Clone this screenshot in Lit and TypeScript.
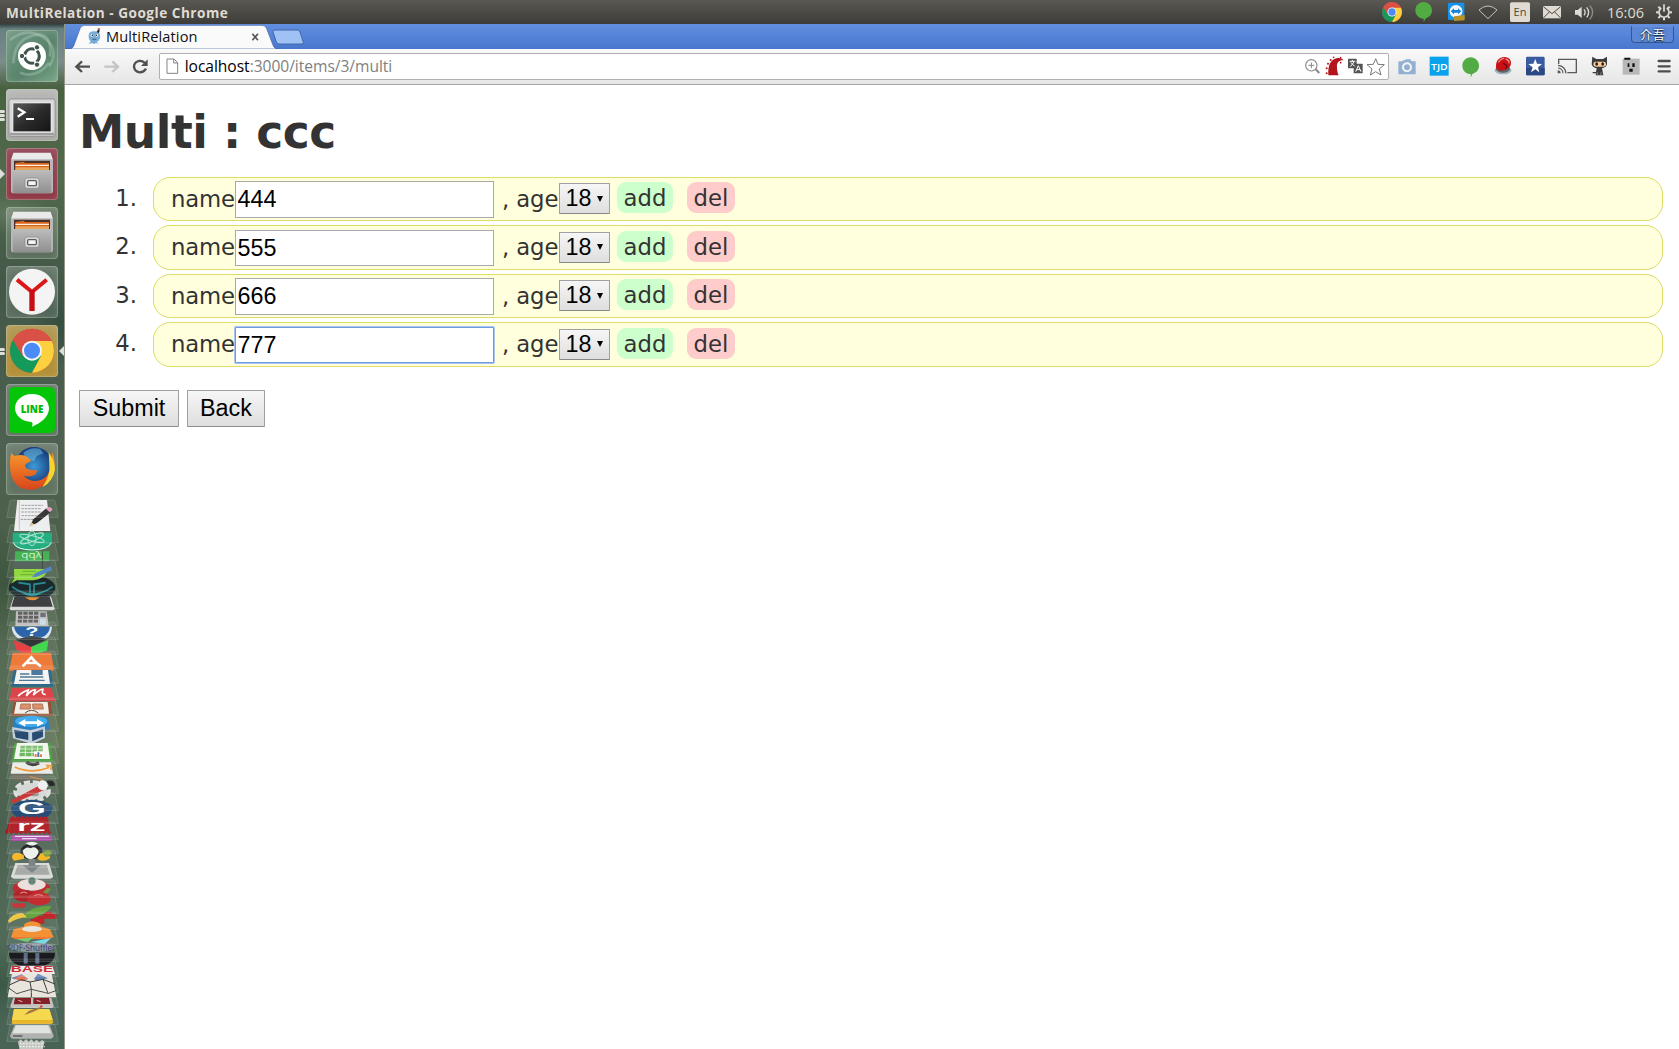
import { LitElement, html, svg, css } from "lit";
import { customElement, property } from "lit/decorators.js";

// Artwork is drawn on a grid of three units per CSS pixel.
const art = (x: number, y: number, w: number, h: number, body: unknown) =>
  html`<svg class="art" width=${w / 3} height=${h / 3} viewBox="${x} ${y} ${w} ${h}">${body}</svg>`;

const chromeBall = (cx: number, cy: number, r: number) => svg`
  <g transform="translate(${cx} ${cy}) scale(${r / 66})">
    <circle r="66" fill="#db4437"/>
    <path d="M-57-33A66 66 0 0 0 0 66L29 14-29 14Z" fill="#159a5b"/>
    <path d="M0 66A66 66 0 0 0 59-29L0-29 27 16Z" fill="#fcd03f"/>
    <path d="M-57-33A66 66 0 0 1 59-29L0-29-28 16Z" fill="#d95146"/>
    <circle r="30" fill="#f5f5f5"/><circle r="24" fill="#4b8bf5"/>
  </g>`;

const gear = (cx: number, cy: number, r: number, c: string) => svg`
  <g transform="translate(${cx} ${cy})" fill="none" stroke="${c}">
    <path d="M-8-13A15 15 0 1 0 8-13" stroke-width="5"/><path d="M0-${r}V-2" stroke-width="5"/>
    ${[45, 90, 135, 180, 225, 270, 315].map((a) => svg`<path d="M0-16V-${r}" stroke-width="6" transform="rotate(${a})"/>`)}
  </g>`;

const bubble = (cx: number, cy: number) => svg`
  <path d="M${cx} ${cy - 29}c14 0 25 11 25 25 0 14-9 21-20 25l-5 11v-11c-14 0-25-11-25-25s11-25 25-25z" fill="#52ab43"/>`;

const panelIcons = [
  art(258, 0, 96, 72, chromeBall(306, 36, 30)),
  art(354, 0, 96, 72, bubble(401, 35)),
  art(450, 0, 96, 72, svg`
    <rect x="474" y="8" width="49" height="52" rx="4" fill="#1493e8"/><circle cx="498" cy="34" r="19" fill="#f2f8fc"/>
    <path d="M482 34l10-9v5h12v-5l10 9-10 9v-5h-12v5z" fill="#1381d6"/><path d="M492 49l32-4v16l-32 2z" fill="#b99324"/>`),
  art(546, 0, 96, 72, svg`<path d="M567 30q27-24 54 0l-27 26z" fill="#45443f" stroke="#dfdbd2" stroke-width="2.5"/>`),
  art(642, 0, 96, 72, svg`<rect x="660" y="7" width="60" height="59" rx="5" fill="#dfdbd2"/>
    <text x="690" y="48" text-anchor="middle" font-size="33" class="ui" fill="#4a4943">En</text>`),
  art(738, 0, 96, 72, svg`<rect x="759" y="18" width="54" height="37" fill="#dfdbd2"/>
    <path d="M760 20l26 21 26-21M760 54l18-18M812 54l-18-18" fill="none" stroke="#4a4943" stroke-width="3"/>`),
  art(834, 0, 96, 72, svg`<path d="M855 30h8l12-10v34l-12-10h-8z" fill="#dfdbd2"/>
    <g fill="none" stroke-width="4"><path d="M882 28q7 9 0 18" stroke="#dfdbd2"/><path d="M890 22q12 15 0 30" stroke="#dfdbd2"/><path d="M899 16q18 21 0 42" stroke="#918f88"/></g>`),
];

const omniIcons = [
  art(36, 156, 62, 84, svg`<g fill="none" stroke="#8a8a8a"><circle cx="64" cy="196" r="17" stroke-width="3.5"/>
    <path d="M64 187v18M55 196h18" stroke-width="3"/><path d="M77 208l11 11" stroke-width="6"/></g>`),
  art(98, 156, 66, 84, svg`<path d="M114 226c-2-32 8-50 29-52 8-1 13 2 17 7-14-1-22 7-20 22 0 9 2 16 5 23z" fill="#b5131b"/>
    <g fill="#b5131b"><circle cx="109" cy="205" r="3"/><circle cx="109" cy="220" r="3"/><circle cx="113" cy="191" r="3"/><circle cx="121" cy="180" r="3"/><circle cx="130" cy="172" r="2.5"/><circle cx="151" cy="173" r="2.5"/><circle cx="151" cy="188" r="2.5"/></g>`),
  art(164, 156, 60, 84, svg`<rect x="173" y="176" width="26" height="29" rx="2" fill="#545454"/><rect x="190" y="191" width="27" height="29" rx="2" fill="#545454"/>
    <path d="M178 184h17M186 180v5M180 200l11-14M181 187l12 12" stroke="#fff" stroke-width="3"/><path d="M196 215l8-18 8 18M199 209h10" stroke="#fff" stroke-width="3" fill="none"/>`),
  art(224, 156, 70, 84, svg`<path d="M256 176l7 17 19 1-15 13 5 18-16-10-16 10 5-18-15-13 19-1z" fill="#fff" stroke="#777" stroke-width="3"/>`),
];

const extensions = [
  art(304, 148, 96, 104, svg`<path d="M330 185h9v-3h7v3h-2l4-6h14l4 6h12v39h-51q-1 0-1-3v-33q0-3 4-3z" fill="#92b1d2"/><circle cx="352" cy="203" r="15" fill="#f4f4f4"/><circle cx="352" cy="203" r="9" fill="#92b1d2"/>`),
  art(400, 148, 96, 104, svg`<path d="M420 171h57v57h-57z" fill="#08a3ec"/><text x="449" y="210" text-anchor="middle" font-size="28" font-weight="600" textLength="50" lengthAdjust="spacingAndGlyphs" class="ui" fill="#fff">TJD</text>`),
  art(496, 148, 96, 104, bubble(543, 202)),
  art(592, 148, 96, 104, svg`<ellipse cx="640" cy="212" rx="25" ry="12" fill="#a2b0b5"/><ellipse cx="640" cy="207" rx="21" ry="12" fill="#54686f"/>
    <path d="M620 207c-4-20 6-35 24-35 16 0 23 12 19 24-5 16-32 23-43 11z" fill="#c81016"/><path d="M626 188q8-12 18-12M648 178q12 4 10 13" stroke="#f28b84" stroke-width="4" fill="none"/><path d="M640 190l12 8-4 9" fill="none" stroke="#660a0a" stroke-width="4"/>`),
  art(688, 148, 96, 104, svg`<rect x="709" y="171" width="56" height="56" rx="4" fill="#3a5b9f"/><path d="M709 205h56v18q0 4-4 4h-48q-4 0-4-4z" fill="#2b4885"/><path d="M737 178l5 14 15 1-12 10 4 15-12-9-13 9 5-15-13-10 15-1z" fill="#fff"/>`),
  art(784, 148, 96, 104, svg`<g fill="none" stroke="#5a5a5a"><path d="M807 193v-14h53v40h-27" stroke-width="4"/><path d="M805 205q14 1 15 16M805 197q22 2 24 24" stroke-width="3.5"/></g><path d="M804 212q9 0 9 9h-9z" fill="#5a5a5a"/>`),
  art(880, 148, 96, 104, svg`<path d="M908 171l12 7h20l12-7v23q-3 10-15 12l4 21h-23l3-21q-12-2-15-12z" fill="#3b3b3d"/><path d="M909 219h9q5 0 6-9" fill="none" stroke="#3b3b3d" stroke-width="4"/>
    <rect x="911" y="186" width="38" height="15" rx="7" fill="#f5cd9b"/><g fill="#26190f"><ellipse cx="921" cy="193" rx="4" ry="5"/><ellipse cx="939" cy="193" rx="4" ry="5"/></g><path d="M923 227v-9M934 227v-9" stroke="#8b8b8b" stroke-width="3"/>`),
  art(976, 148, 96, 104, svg`<path d="M999 177h51v48h-51z" fill="#b8b8b8"/><path d="M1004 180v-6h18v6zM1014 191h5v11h-5zM1028 191h7v11h-7zM1019 207h10v9h-10z" fill="#111"/>`),
  art(1072, 148, 95, 104, svg`<path d="M1107 184h33M1107 200h33M1107 215h33" stroke="#4d4d4d" stroke-width="7" stroke-linecap="round"/>`),
];

const cabinet = (y: number) => svg`<g transform="translate(0 ${y})">
  <path d="M40 14h112l7 22v8H33v-8z" fill="#e9e9e9"/><path d="M33 34h126v95q0 7-7 7H40q-7 0-7-7z" fill="#b9b9b9"/>
  <path d="M42 38h108v34H42z" fill="#47312a"/><path d="M46 45l25-4 4 4h72v22H46z" fill="#d8641d"/><path d="M46 50h101v4H46z" fill="#fff1dd"/><path d="M46 58h101v12H46z" fill="#e9a45b"/>
  <path d="M38 66h116v64q0 6-6 6H44q-6 0-6-6z" fill="url(#steel)"/><rect x="75" y="90" width="42" height="31" rx="6" fill="#d8d8d8" stroke="#888" stroke-width="2"/><rect x="83" y="98" width="26" height="15" rx="3" fill="#f4f4f4" stroke="#5d5d5d" stroke-width="4"/></g>`;

const defs = svg`<defs>
  <linearGradient id="steel" x2="0" y2="1"><stop stop-color="#bcbcbc"/><stop offset="1" stop-color="#8f8f8f"/></linearGradient>
  <linearGradient id="screen" x2="1" y2="1"><stop stop-color="#5b5b5b"/><stop offset=".5" stop-color="#2b2b2b"/><stop offset="1" stop-color="#151515"/></linearGradient>
  <radialGradient id="globe"><stop stop-color="#3d9bd8"/><stop offset="1" stop-color="#173a78"/></radialGradient>
  <linearGradient id="fox" x2="0" y2="1"><stop stop-color="#f79a2c"/><stop offset="1" stop-color="#d9451b"/></linearGradient>
</defs>`;

const launchers: { kind: string; running?: number; picture: unknown }[] = [
  { kind: "dash", picture: art(18, 30, 156, 156, svg`
    <g fill="none" stroke="#c9e0d3" stroke-opacity=".3" stroke-width="8"><path d="M40 130Q42 60 100 46T150 110"/><path d="M30 60Q80 20 130 52T148 140"/><path d="M60 158q50 20 88-30"/></g>
    <circle cx="96" cy="108" r="42" fill="#fff"/><circle cx="96" cy="108" r="22" fill="none" stroke="#3f5549" stroke-width="9" stroke-dasharray="39 7" stroke-dashoffset="-27"/>
    <g fill="#3f5549" stroke="#fff" stroke-width="3"><circle cx="66" cy="108" r="8"/><circle cx="111" cy="82" r="8"/><circle cx="111" cy="134" r="8"/></g>`) },
  { kind: "terminal", running: 3, picture: art(18, 207, 156, 156, svg`${defs}
    <rect x="27" y="237" width="138" height="112" rx="7" fill="#d7d8d8" stroke="#7f8080" stroke-width="2"/><path d="M30 338h132v8H30z" fill="#9d9d9d"/><rect x="36" y="246" width="120" height="92" fill="#e5e5e5"/>
    <rect x="40" y="250" width="112" height="84" fill="url(#screen)"/><path d="M53 265l20 12-20 13" fill="none" stroke="#fff" stroke-width="7"/><path d="M78 297h24" stroke="#fff" stroke-width="6"/>`) },
  { kind: "files-red", running: 1, picture: art(18, 384, 156, 156, svg`${defs}${cabinet(384)}`) },
  { kind: "plain", picture: art(18, 561, 156, 156, svg`${defs}${cabinet(561)}`) },
  { kind: "plain", picture: art(18, 18, 156, 156, svg`<circle cx="96" cy="95" r="69" fill="#f4f4f4"/><path d="M51 59l45 37 44-37" fill="none" stroke="#dc1717" stroke-width="12"/><path d="M88 91h16v62H88z" fill="#c90d15"/>`) },
  { kind: "gold", running: 2, picture: art(18, 195, 156, 156, chromeBall(96, 272, 66)) },
  { kind: "plain", picture: art(18, 372, 156, 156, svg`<rect x="27" y="381" width="138" height="138" rx="16" fill="#04c508"/>
    <path d="M96 402c29 0 51 19 51 43 0 27-27 46-51 55 2-7 3-12-2-14-27-1-49-18-49-41 0-24 22-43 51-43z" fill="#fff"/>
    <text x="96" y="458" text-anchor="middle" font-size="33" font-weight="800" textLength="68" lengthAdjust="spacingAndGlyphs" class="ui" fill="#04b808">LINE</text>`) },
  { kind: "plain", picture: art(18, 549, 156, 156, svg`${defs}<circle cx="102" cy="619" r="58" fill="url(#globe)"/><path d="M70 578q20-18 50-12l10 14-20 8-8 16-25-8z" fill="#6dbbe2" opacity=".55"/>
    <path d="M34 578q4 8 12 10 20-8 36 3l12 12-16 8q-6 8 4 16 16 5 31 3l-8 14q-17 9-34 3 26 26 58 10 30-18 27-82 13 27 5 56-12 50-63 58-50 3-65-45-7-38 1-66z" fill="url(#fox)"/>
    <path d="M146 577q19 24 19 52-6 35-38 53 25-37 21-68z" fill="#f9d42f"/>`) },
];

// Folded launcher icons, listed from the top of the pile downwards.
const pileTops = [500, 525, 543, 560, 577, 591, 608, 622, 637, 651, 666, 682, 698, 714, 730, 746, 761, 776, 793, 806, 822, 836, 850, 866, 880, 896, 912, 927, 944, 959, 975, 990, 1007, 1024];

const pile = html`<svg class="art" width="65" height="553" viewBox="0 496 65 553">
  ${defs}
  <g transform="translate(0 490) scale(.33333)">
    <path d="M52 30h89l10 93H42z" fill="#eceef0"/><path d="M58 31v89" stroke="#e58f8f" stroke-width="2"/><path d="M64 46h65M64 56h58M64 66h60M64 77h48M62 88h50" stroke="#9a9a9a" stroke-width="3" stroke-dasharray="8 2"/>
    <path d="M89 109l11-21 39-33 13 12-41 32z" fill="#2b2b2b"/><path d="M89 109l6-12 9 8z" fill="#e8cf8c"/><path d="M138 56l8-5q10 1 11 9l-8 7z" fill="#e49bb8"/>
    <path d="M38 128h118v24q-3 29-60 30-57-1-58-30z" fill="#14a878"/><path d="M40 158q8 21 56 22 50-1 58-22" fill="none" stroke="#e4f2ea" stroke-width="3"/><g fill="none" stroke="#a6e4cc" stroke-width="3"><ellipse cx="96" cy="145" rx="38" ry="8" transform="rotate(14 96 145)"/><ellipse cx="96" cy="145" rx="37" ry="9" transform="rotate(-22 96 145)"/><ellipse cx="96" cy="145" rx="12" ry="22"/></g>
    <path d="M42 184h108l4 52H38z" fill="#4b5a53"/><path d="M46 184h102v30H44z" fill="#37ad47"/><text x="94" y="-190" transform="scale(1 -1)" text-anchor="middle" font-size="28" textLength="60" lengthAdjust="spacingAndGlyphs" class="ui" fill="#d8f3d2">ddy</text><path d="M126 184h3v52h-3z" fill="#33423b"/>
    <ellipse cx="96" cy="293" rx="70" ry="36" fill="#0a191c"/><path d="M36 290q60 45 122 0M55 278l35 5v32M137 278l-35 5v32M70 310q26 12 52 0" fill="none" stroke="#18858a" stroke-width="5"/>
    <path d="M42 237h98q2 28-42 34H50l-17 10 10-15z" fill="#89d831"/><path d="M68 244h40M61 254h38" stroke="#4d8f20" stroke-width="2"/><path d="M95 262l12-13 45-20 5 12-49 20z" fill="#447ebd"/>
    <path d="M41 320h112l11 36q-2 5-7 5H36q-6 0-7-5z" fill="#d5d5d5"/><path d="M43 320h106l9 30H34z" fill="#303236"/><path d="M74 322h45q-20 18-45 0z" fill="#e98829"/>
    <path d="M48 364h92l6 44H46z" fill="#b9bab9"/><path d="M54 370h61M54 382h62M53 394h62" stroke="#555" stroke-width="9" stroke-dasharray="13 3"/><path d="M121 368h16v13h-16z" fill="#62676b"/><path d="M120 386h17v18h-17z" fill="#c6dbe6"/>
    <path d="M35 410h121q-2 46-60 46-59-4-61-46z" fill="#d8e2ed"/><path d="M42 410h108q-5 37-54 37-48-3-54-37z" fill="#1c58a3"/><text x="96" y="438" text-anchor="middle" font-size="40" class="pic" font-weight="700" fill="#fff" textLength="40" lengthAdjust="spacingAndGlyphs">?</text>
    <path d="M46 448l50-10 47 9-50 24z" fill="#242729"/><path d="M40 451l53 20v27l-43-17z" fill="#e73337"/><path d="M93 471l52-21-4 31-48 18z" fill="#35d443"/>
    <path d="M38 488h115l10 54H28z" fill="#ed702c"/><path d="M68 529l26-27q9 14 29 27M78 519h35" fill="none" stroke="#fff" stroke-width="8"/>
    <path d="M42 543h110l6 32H34z" fill="#1c668e"/>
  </g>
  <g transform="translate(0 670) scale(.33333)">
    <path d="M42 0h110l7 50H33z" fill="#205d80"/><path d="M50 0h94l6 42H42z" fill="#f4f4f4"/><path d="M60 12h28M60 21h70M57 31h77" stroke="#43708c" stroke-width="4"/><path d="M94 0h34v15H94z" fill="#416f97"/>
    <path d="M36 54h118l12 40H27z" fill="#d9373c"/><path d="M54 78q18-15 31-18l-6 18q16-20 27-18l-6 15q22-19 29-17-6 17 8 15" fill="none" stroke="#fff" stroke-width="5"/>
    <path d="M42 96h110l6 42H34z" fill="#8f4323"/><path d="M49 96h94l4 35H42z" fill="#f2eee7"/><path d="M63 102h28v15H60zM98 102h29l3 15H99z" fill="#d58a63" stroke="#b26848" stroke-width="3"/><path d="M75 129q20-16 40 0" fill="none" stroke="#55402f" stroke-width="3"/>
    <path d="M43 143h101l5 36H41z" fill="#1776c2"/><ellipse cx="94" cy="154" rx="48" ry="17" fill="#35a6ed"/><path d="M55 159l21-12v7h35v-7l21 12-21 11v-8H76v8z" fill="#fff"/>
    <path d="M36 171l55 10 44-12v35l-39 18-57-17z" fill="#bdcbda"/><path d="M42 179l43 8v23l-38-7zM96 188l33-10v22l-32 14z" fill="#193e66"/>
    <path d="M43 219h108l8 56H34z" fill="#3f9a35"/><path d="M51 219h92l7 48H42z" fill="#f3f7ee"/><path d="M62 227h66v32H58z" fill="#63b356"/><path d="M60 237h67M59 247h66M76 227v32M96 227v32M113 227v32" stroke="#f3f7ee" stroke-width="2.500"/><path d="M102 244h28v18h-28z" fill="#fff"/><path d="M107 261v-9M123 261v-8" stroke="#e47636" stroke-width="6"/><path d="M115 261v-14" stroke="#2f6fb4" stroke-width="6"/>
    <path d="M38 277h115l6 34H32z" fill="#e9ebe6"/><path d="M79 276q16 14 38 2" fill="none" stroke="#333" stroke-width="10"/><path d="M44 291q50 22 101 2l-4-7 14 1-3 13" fill="none" stroke="#ee942a" stroke-width="5"/>
    <path d="M36 312h100q-10 18-39 20H56q-25-2-20-20z" fill="#656154"/><path d="M89 320l41 10" stroke="#b97e34" stroke-width="4"/>
    <ellipse cx="96" cy="364" rx="49" ry="26" fill="none" stroke="#dadddb" stroke-width="15" stroke-dasharray="18 8"/><ellipse cx="96" cy="364" rx="46" ry="25" fill="#d3d5d3"/><ellipse cx="104" cy="371" rx="13" ry="8" fill="#8d9890"/><path d="M35 391l86-46q2 13 13 14l-93 41q-9-1-6-9z" fill="#c52a2c"/><circle cx="128" cy="346" r="15" fill="#eee"/><path d="M139 333q24-7 26 14l-16 2z" fill="#17191d"/>
    <path d="M32 408q65-38 126 0 0 42-62 43-64-1-64-43z" fill="#17406d"/><text x="96" y="432" text-anchor="middle" font-size="48" font-weight="700" class="pic" fill="#fff" textLength="84" lengthAdjust="spacingAndGlyphs">G</text>
    <path d="M31 444l8-7 7 7 7-7 7 7 7-7 7 7 7-7 7 7 7-7 7 7 7-7 7 7 7-7 7 7 7-7 8 9 3 34 6 8-7 5-7-6-7 6-7-6-7 6-7-6-7 6-7-6-7 6-7-6-7 6-7-6-7 6-7-6-7 6-7-6-7 6-7-6-7 6-6-6 6-10z" fill="#aa141b"/><text x="94" y="484" text-anchor="middle" font-size="44" font-weight="700" class="pic" fill="#fff" textLength="85" lengthAdjust="spacingAndGlyphs">rz</text>
    <path d="M38 495h117v18H34z" fill="#a63da2"/><path d="M45 499h102M66 506h44" stroke="#ecd2ee" stroke-width="4"/>
    <ellipse cx="94" cy="545" rx="33" ry="24" fill="#17191c"/><path d="M76 520q20-10 38 0-16 14-38 0M68 543q10-16 24-8 14-9 24 9-3 20-24 24-20-3-24-25z" fill="#eef0eb"/><path d="M36 558q6-12 22-8l13 4 2 12-31 6q-8-7-6-14zM112 564l10-14q26 0 29 14l-12 7q-24 4-27-7z" fill="#f6b31a"/><path d="M126 548q18-14 30-2-6 17-20 14z" fill="#7b9a34"/>
  </g>
  <g transform="translate(0 859) scale(.33333)">
    <path d="M46 12h101l12 40q0 6-8 7H42q-8-1-9-7z" fill="#d8dad7"/><path d="M53 18h88l8 29H43z" fill="#a2a4a1"/><path d="M86 0h20v19h16l-26 22-28-22h18z" fill="#747b7b"/>
    <ellipse cx="94" cy="88" rx="56" ry="27" fill="#b71c26"/><ellipse cx="95" cy="77" rx="42" ry="18" fill="#e9ddd8"/><circle cx="96" cy="66" r="11" fill="#4e7165"/><path d="M120 108l22-22 12 3-18 22z" fill="#6b8a3a"/><ellipse cx="72" cy="110" rx="33" ry="18" fill="#a81418"/><ellipse cx="117" cy="119" rx="35" ry="20" fill="#c11c20"/><path d="M61 103q12-7 20 0M102 111q14-8 27 0" stroke="#df7371" stroke-width="4" fill="none"/>
    <path d="M33 133h45v12l-36 2z" fill="#c5272c"/><path d="M101 170h28v-12h27v7h13v14h-36v15H92v-14h9z" fill="#bd171a"/><path d="M69 172q29-35 86-30-15 22-35 25-14 13-49 10z" fill="#5c9e31"/><path d="M24 185q12-22 43-23 11 6 13 13-28 2-53 17z" fill="#edc33c"/>
    <path d="M72 203q-4-12 25-16 29 4 25 16l28 8 11 24q-64 6-128 0l8-24z" fill="#f28926"/><ellipse cx="96" cy="210" rx="30" ry="9" fill="#e5e1da"/><path d="M33 234h127l-13 6H45z" fill="#f36d22"/><path d="M48 241l53-6-18 14z" fill="#69c86a"/><path d="M92 249l61-12-18 17z" fill="#72d8e9"/>
    <ellipse cx="96" cy="265" rx="68" ry="14" fill="#c0c3d6" opacity=".45"/><path d="M27 281h138q1 42-69 44-69-2-69-44z" fill="#080a0f"/><path d="M77 282v32M112 282v32" stroke="#56617e" stroke-width="12"/><text x="95" y="277" text-anchor="middle" font-size="29" class="ui" fill="#28287b" textLength="142" lengthAdjust="spacingAndGlyphs">PDF-Shuffler</text>
    <path d="M35 320h122l8 25H28z" fill="#eee8e8"/><text x="96" y="340" text-anchor="middle" font-size="27" font-weight="700" class="pic" fill="#cb1e25" textLength="128" lengthAdjust="spacingAndGlyphs">BASE</text>
    <path d="M36 344h119l14 71H23z" fill="#e8e4da"/><path d="M34 357l31-11 20 15h-42zM88 344l14 15 12-15 30 14-36 7z" fill="#5877b1"/><path d="M65 347l19 13-16 7-26-8z" fill="#e36b54"/><path d="M28 378l35-16 27 7 4 22-44 13-24-17M90 369l39-8 36 14M94 391l51 12 23-8M94 391v24M129 361l15 42" fill="none" stroke="#292c2c" stroke-width="3"/>
    <path d="M40 416h114l7 25q0 6-7 6H38q-8-1-7-6z" fill="#bebfb9"/><path d="M45 417h48v19H41zM100 417h47l4 18h-51z" fill="#7c1018"/><path d="M55 424l12 4M110 424l12 4" stroke="#e3beb8" stroke-width="3"/>
    <path d="M41 453h108l11 37q-3 5-7 5H38l-3-4z" fill="#e7b119"/><path d="M42 450h106l10 33H36z" fill="#f5d443"/><path d="M73 468l14-13 36-12 2 4-34 15z" fill="#9b6a35"/><circle cx="124" cy="443" r="4" fill="#d32b22"/>
    <path d="M44 498h105l12 33q-3 8-8 8H38q-6-1-8-8z" fill="#aaaead"/><path d="M48 499h96l10 24H37z" fill="#dfe1df"/><path d="M39 531h28" stroke="#444" stroke-width="4"/>
    <path d="M54 549l8-8 8 7 8-8 8 8 8-7 8 8 8-7 8 8 8-7 8 5-6 25H59z" fill="#c6c8c3"/><path d="M60 554h70M60 563h74" stroke="#eee" stroke-width="4" stroke-dasharray="5 4"/>
  </g>
  ${pileTops.map((y) => svg`<path d="M${11} ${y}h42.500q1.500 0 1.800 1.500l3 16h-51.500l3-16q.2-1.500 1.200-1.500z" fill="#ffffff" fill-opacity=".07" stroke="#e4eee5" stroke-opacity=".2" stroke-width=".8"/>`)}
</svg>`;

@customElement("launch-bar")
export class LaunchBar extends LitElement {
  static styles = css`
    :host { display: block; width: 65px; box-sizing: border-box; overflow: hidden; padding-top: 6px; position: relative;
      border-right: 1px solid #8f9883;
      background:
        radial-gradient(ellipse 44px 20px at 10px 190px, #6b8068aa, #0000),
        radial-gradient(ellipse 34px 44px at 62px 300px, #2e493ab0, #0000),
        radial-gradient(ellipse 50px 60px at 4px 560px, #2f4a3190, #0000),
        radial-gradient(ellipse 30px 60px at 62px 720px, #76895b90, #0000),
        radial-gradient(ellipse 40px 40px at 2px 960px, #2f4e3c90, #0000),
        linear-gradient(#667f80 0, #7b8c8a 38px, #48613f 64px, #526a4c 150px, #435848 260px, #4e6150 420px, #4c604b 520px, #586d56 660px, #4b6150 800px, #516a58 900px, #486354 1025px); }
    :host::before { content: ""; position: absolute; inset: 0 0 auto; height: 5px; background: linear-gradient(#17201caa, #0000); }
    .list { display: flex; flex-direction: column; gap: 7px; }
    .item { display: flex; align-items: center; height: 52px; position: relative; padding-left: 6px; }
    .tile { box-sizing: border-box; width: 52px; height: 52px; border-radius: 4px; overflow: hidden; box-shadow: inset 0 0 0 1px #c8d9ca50, inset 0 0 8px #ffffff28; background: linear-gradient(#ffffff30, #ffffff18); }
    .dash { background: linear-gradient(135deg, #769b87, #578269 60%, #77a587); }
    .terminal { background: linear-gradient(#b8b8b6, #a5a5a2); }
    .files-red { background: linear-gradient(#944655, #8f3443); }
    .gold { background: linear-gradient(#b09a58, #b38e33); }
    .art { display: block; }
    .ui { font-family: "Open Sans", "Noto Sans", sans-serif; }
    .pic { font-family: "Liberation Sans", Arial, sans-serif; }
    .marks { position: absolute; left: 0; top: 20px; height: 12px; display: flex; flex-direction: column; justify-content: center; gap: 1px; }
    .mark { width: 5px; height: 3px; border-radius: 0 2px 2px 0; background: #dededb; }
    .arrow { width: 0; border: 5px solid transparent; border-left-color: #dededb; border-right: 0; }
    .focus { position: absolute; right: 0; top: 21px; border: 5px solid transparent; border-right-color: #dededb; border-left: 0; }
    .pile { padding-top: 1px; }
  `;
  render() {
    return html`<div class="list">${launchers.map((l) => html`<div class="item">
      ${l.running ? html`<div class="marks">${l.running === 1 ? html`<i class="arrow"></i>` : Array.from({ length: l.running }, () => html`<i class="mark"></i>`)}</div>` : ""}
      <div class="tile ${l.kind}">${l.picture}</div>
      ${l.kind === "gold" ? html`<i class="focus"></i>` : ""}
    </div>`)}</div><div class="pile">${pile}</div>`;
  }
}

@customElement("multi-page")
export class MultiPage extends LitElement {
  @property({ attribute: false }) names = ["444", "555", "666", "777"];
  static styles = css`
    :host { display: block; background: #fff; color: #333; font: 22.75px "DejaVu Sans", sans-serif; padding: 0 16px 0 14px; }
    h1 { box-sizing: border-box; margin: 0; padding: 18.2px 0 0; height: 91.7px; font-size: 45.5px; line-height: 60px; font-weight: 700; letter-spacing: -.42px; }
    ol { margin: 0; padding: 0; list-style: none; display: flex; flex-direction: column; gap: 3.75px; }
    li { display: flex; height: 44.75px; }
    .num { width: 58px; padding-right: 16px; text-align: right; line-height: 43px; }
    .row { flex: 1; box-sizing: border-box; display: flex; align-items: flex-start; border: 1px solid #dddd66; border-radius: 17px; background: #ffffdd; padding-left: 17px; }
    .label { width: 64px; line-height: 43px; white-space: pre; margin-top: 0.300px; letter-spacing: -.15px; }
    .age { width: 57px; padding-left: 8px; letter-spacing: -.1px; }
    .field { box-sizing: border-box; width: 259px; height: 36.5px; margin-top: 3.7px; padding: 0 1.500px; border: 1px solid #a9a9a9; border-radius: 0; outline: 0; background: #fff; color: #000; font: 23.33px "Liberation Sans", Arial, sans-serif; line-height: 34px; }
    .active { border-color: #6e9ae0; box-shadow: 0 0 0 1px #a9c5f2; border-radius: 1px; }
    .pick { box-sizing: border-box; width: 51px; height: 31px; margin-top: 5.7px; display: flex; align-items: center; gap: 6px; padding: 0 5.5px; border: 1px solid #a0a0a0; border-bottom-color: #888; border-radius: 1px; background: linear-gradient(#f6f6f6, #dedede); color: #000; font: 23.33px "Liberation Sans", Arial, sans-serif; line-height: 28px; padding-bottom: 1px; }
    .caret { border: 3px solid transparent; border-top: 6px solid #000; border-bottom: 0; margin-top: 1px; }
    .chip { height: 31px; line-height: 32px; margin-top: 4.7px; border-radius: 9px; text-align: center; }
    .add { width: 56px; margin-left: 7px; background: #ccffcc; }
    .del { width: 48px; margin-left: 14px; background: #ffcccc; }
    .actions { display: flex; gap: 8px; margin-top: 22.9px; }
    .btn { box-sizing: border-box; height: 37px; padding: 0; border: 1px solid #a0a0a0; border-bottom-color: #8c8c8c; border-radius: 1px; background: linear-gradient(#f6f6f6, #dedede); color: #000; font: 23.33px "Liberation Sans", Arial, sans-serif; }
    .submit { width: 100px; }
    .back { width: 78px; }
  `;
  render() {
    return html`<h1>Multi : ccc</h1>
      <ol>${this.names.map((n, i) => html`<li><span class="num">${i + 1}.</span><div class="row">
        <span class="label">name</span><input class="field ${i === 3 ? "active" : ""}" .value=${n}>
        <span class="label age">, age</span><span class="pick">18<i class="caret"></i></span>
        <span class="chip add">add</span><span class="chip del">del</span></div></li>`)}</ol>
      <div class="actions"><button class="btn submit">Submit</button><button class="btn back">Back</button></div>`;
  }
}

@customElement("app-root")
export class AppRoot extends LitElement {
  static styles = css`
    :host { display: flex; flex-direction: column; width: 100%; height: 100vh; overflow: hidden; font-family: "Open Sans", "Noto Sans", "Noto Sans CJK JP", sans-serif; }
    .art { display: block; flex: none; }
    .ui { font-family: "Open Sans", "Noto Sans", sans-serif; }
    .panel { flex: none; height: 24px; display: flex; align-items: center; background: linear-gradient(#5a5852, #3d3c38); color: #dfdbd2; }
    .title { flex: 1; padding-left: 6px; font-size: 13.6px; font-weight: 700; letter-spacing: .5px; }
    .clock { width: 51px; text-align: center; font-size: 14.5px; }
    .body { flex: 1; display: flex; min-height: 0; }
    .window { flex: 1; min-width: 0; display: flex; flex-direction: column; background: #fff; }
    .tabs { flex: none; height: 25px; display: flex; background: linear-gradient(#628fdf, #4877cd); justify-content: space-between; }
    .tabrow { display: grid; grid-template-columns: 240px; }
    .shape, .tabtext { grid-area: 1 / 1; }
    .tabtext { display: flex; align-items: center; z-index: 1; padding: 0 45px 0 22px; color: #111; font-size: 14.6px; }
    .name { flex: 1; padding-left: 5px; letter-spacing: .1px; line-height: 23px; }
    .user { box-sizing: border-box; width: 43px; height: 17px; margin: 2px 5px 0 0; border: 1px solid #34578f; border-top-color: #6a8fd4; border-radius: 0 0 4px 4px; background: #5b87d6; color: #fff; font-size: 12.5px; line-height: 17px; text-align: center; text-shadow: 0 0 2px #123, 0 1px 1px #123; }
    .bar { flex: none; box-sizing: border-box; height: 36px; display: flex; align-items: center; background: linear-gradient(#f9f9f9, #e6e6e6); border-bottom: 1px solid #a6a6a6; }
    .omni { flex: 1; box-sizing: border-box; height: 27px; margin: 0 2.500px 1px 0; border: 1px solid #b0b0b0; border-radius: 2px; background: #fff; display: flex; align-items: center; }
    .url { flex: 1; padding-left: 5px; font-size: 15.6px; color: #808080; line-height: 23px; letter-spacing: -.04px; }
    .host { color: #000; }
    launch-bar { flex: none; }
    multi-page { flex: 1; }
  `;
  render() {
    return html`
      <div class="panel"><div class="title">MultiRelation - Google Chrome</div>${panelIcons}<div class="clock">16:06</div>
        ${art(1083, 0, 84, 72, gear(1122, 37, 24, "#dfdbd2"))}</div>
      <div class="body"><launch-bar></launch-bar>
        <div class="window">
          <div class="tabs"><div class="tabrow">
            <div class="shape">${art(195, 72, 720, 75, svg`
              <path d="M195 147h12q10 0 14-9l19-52q4-10 14-10h532q10 0 14 10l20 52q4 9 14 9z" fill="#fafafa" stroke="#3e62a5" stroke-width="2"/>
              <path d="M824 90h68q6 0 8 6l10 31q1 5-5 5h-68q-6 0-8-6l-10-30q-2-6 5-6z" fill="#a0c1f3" stroke="#4168ae" stroke-width="3"/>`)}</div>
            <div class="tabtext">${art(261, 84, 42, 54, svg`<path d="M266 105q0-10 17-11 17 1 17 12v9q-2 9-10 10l6 6-8-2-6 3-6-3-10 3 6-8q-7-5-6-19z" fill="#78acd5"/><path d="M290 96l5-8 4 3-2 8z" fill="#222"/><path d="M293 87h7" stroke="#c33" stroke-width="4"/><circle cx="276" cy="106" r="4" fill="#fff"/><circle cx="290" cy="106" r="4" fill="#fff"/><circle cx="277" cy="106" r="2.500" fill="#234"/><circle cx="289" cy="106" r="2.500" fill="#234"/><path d="M277 117q6 4 12 0" stroke="#345d84" stroke-width="3" fill="none"/>`)}
              <span class="name">MultiRelation</span>${art(752, 84, 27, 54, svg`<path d="M756 101l17 20M773 101l-17 20" stroke="#555" stroke-width="5"/>`)}</div>
          </div><div class="user">介吾</div></div>
          <div class="bar">
            ${art(195, 147, 283, 105, svg`<g fill="none" stroke-width="7"><path d="M270 200h-40M246 184l-17 16 17 16" stroke="#505050"/><path d="M313 200h40M337 184l17 16-17 16" stroke="#c4c4c4"/><path d="M435 189q-9-8-19-6-14 4-14 17 1 15 17 17 13 0 19-11" stroke="#505050"/></g><path d="M443 178v20h-20z" fill="#505050"/>`)}
            <div class="omni">${art(481, 160, 58, 78, svg`<path d="M502 178h21l11 11v32h-32zM522 178v12h12" fill="#fff" stroke="#858585" stroke-width="3"/>`)}
              <div class="url"><span class="host">localhost</span>:3000/items/3/multi</div>${omniIcons}</div>
            ${extensions}
          </div>
          <multi-page></multi-page>
        </div></div>`;
  }
}
